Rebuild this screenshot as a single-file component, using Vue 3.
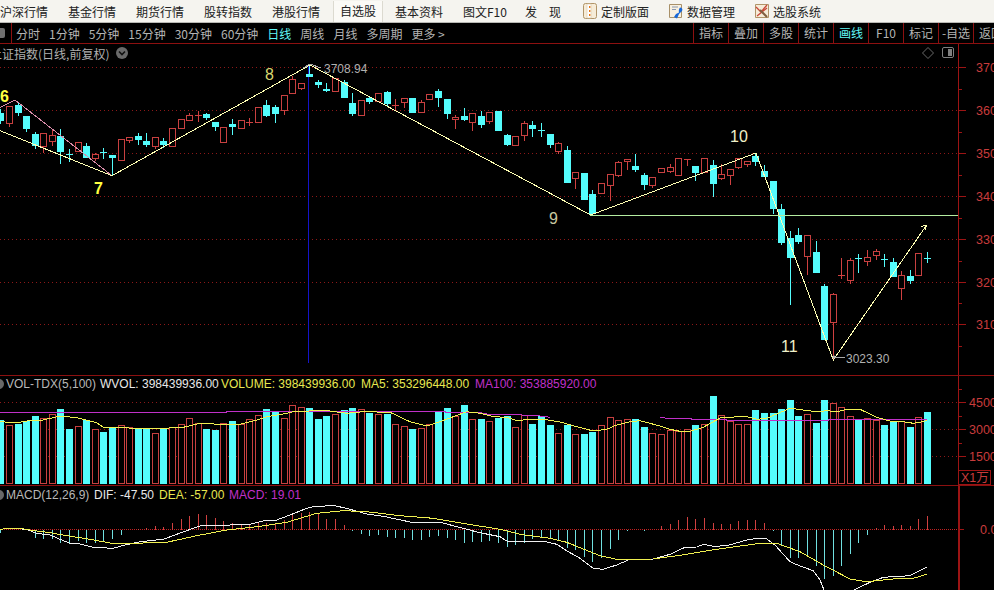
<script setup>
import { computed } from 'vue'

const menuItems = ['沪深行情', '基金行情', '期货行情', '股转指数', '港股行情']
const menuItems2 = ['基本资料', '图文F10', '发　现']
const periods = ['分时', '1分钟', '5分钟', '15分钟', '30分钟', '60分钟', '日线', '周线', '月线', '多周期', '更多 >']
const tools = ['指标', '叠加', '多股', '统计', '画线', 'F10', '标记', '-自选', '返回']

// [colour, body top, body bottom, wick top, wick bottom], read off the reference at 3x
const partA = [
  ['c', 155, 180, 145, 190], ['r', 138, 190, 138, 197], ['c', 133, 157, 122, 165], ['c', 165, 205, 165, 213],
  ['c', 218, 255, 213, 265], ['r', 220, 258, 220, 275], ['r', 224, 243, 208, 255], ['c', 225, 273, 205, 308],
  ['c', 283, 283, 265, 303], ['r', 247, 274, 247, 274], ['c', 255, 290, 247, 290], ['r', 283, 295, 275, 300],
  ['c', 277, 277, 262, 293], ['c', 283, 290, 283, 345], ['r', 238, 300, 238, 300], ['r', 232, 241, 228, 245],
  ['c', 225, 237, 215, 252], ['c', 240, 253, 215, 258], ['r', 232, 258, 232, 264], ['c', 240, 252, 230, 262],
  ['r', 205, 257, 205, 257], ['r', 176, 203, 176, 203], ['r', 165, 179, 155, 179], ['r', 165, 165, 150, 183],
  ['c', 158, 172, 155, 178], ['c', 184, 198, 184, 210], ['r', 202, 245, 202, 245], ['c', 189, 197, 175, 222],
  ['r', 181, 203, 181, 203], ['r', 186, 186, 172, 195], ['r', 141, 185, 141, 185], ['c', 132, 165, 118, 168],
  ['c', 138, 158, 132, 186], ['r', 106, 150, 106, 162], ['r', 58, 100, 45, 100], ['r', 68, 83, 68, 88],
  ['c', 40, 47, 10, 47], ['c', 63, 73, 58, 80], ['c', 83, 90, 65, 92]
]
const partB = [
  ['r', 25, 62, 25, 62], ['c', 33, 80, 28, 80], ['c', 97, 128, 66, 135], ['r', 91, 134, 91, 134],
  ['c', 82, 92, 75, 100], ['r', 68, 92, 68, 92], ['c', 64, 98, 60, 104], ['r', 104, 104, 85, 118],
  ['r', 85, 97, 85, 110], ['c', 81, 125, 81, 125], ['r', 97, 127, 88, 127], ['r', 73, 88, 70, 88],
  ['c', 60, 80, 55, 108], ['c', 84, 128, 84, 143], ['r', 142, 148, 133, 173], ['c', 135, 147, 112, 150],
  ['r', 130, 157, 130, 180], ['c', 135, 162, 120, 170], ['r', 127, 152, 127, 158], ['c', 120, 179, 120, 179],
  ['c', 192, 222, 188, 225], ['r', 199, 224, 195, 224], ['r', 160, 195, 150, 210], ['c', 162, 173, 150, 197],
  ['c', 179, 179, 155, 198], ['c', 190, 222, 190, 230], ['r', 219, 243, 213, 250], ['c', 237, 335, 225, 335],
  ['r', 307, 325, 303, 353], ['c', 306, 386, 306, 386], ['c', 370, 430, 357, 435], ['r', 340, 370, 340, 370],
  ['r', 313, 344, 313, 389], ['r', 277, 315, 270, 318], ['r', 268, 274, 268, 296], ['c', 285, 297, 250, 302],
  ['c', 313, 342, 305, 356], ['r', 320, 345, 320, 350]
]
const partC = [
  ['r', 115, 127, 115, 127], ['r', 112, 122, 100, 127], ['r', 83, 134, 83, 134], ['r', 86, 86, 86, 105],
  ['c', 106, 125, 106, 150], ['r', 85, 125, 85, 125], ['c', 103, 158, 88, 198], ['r', 133, 145, 100, 147],
  ['r', 118, 135, 118, 163], ['r', 85, 111, 85, 113], ['r', 92, 103, 92, 109], ['c', 75, 92, 70, 105],
  ['c', 120, 137, 102, 137], ['c', 150, 233, 150, 248], ['c', 235, 336, 220, 342], ['c', 322, 380, 300, 522],
  ['c', 312, 332, 292, 338], ['r', 316, 379, 316, 432], ['c', 363, 425, 330, 425], ['c', 465, 628, 460, 628],
  ['r', 492, 575, 487, 690], ['r', 436, 436, 380, 445], ['r', 391, 449, 381, 458], ['c', 385, 385, 368, 425],
  ['r', 380, 392, 358, 404], ['r', 363, 374, 355, 386], ['c', 386, 386, 370, 408], ['c', 394, 437, 380, 437],
  ['r', 435, 475, 420, 507], ['c', 435, 450, 418, 458], ['r', 370, 434, 370, 434], ['c', 384, 384, 364, 396]
]

const volTops = [
  148, 165, 158, 150, 135, 145, 132, 114, 174, 168, 148, 178, 182, 172, 165, 172, 172, 172, 190, 172, 170, 163, 145,
  158, 174, 177, 160, 150, 163, 148, 135, 114, 120, 145, 106, 112, 111, 144, 135, 132, 118, 111, 118, 126, 132, 128,
  163, 168, 174, 175, 163, 120, 111, 138, 102, 148, 144, 153, 140, 135, 171, 135, 159, 135, 162, 190, 162, 193, 189,
  183, 166, 141, 150, 148, 144, 168, 190, 193, 180, 183, 178, 162, 162, 75, 135, 152, 162, 162, 117, 126, 126, 114,
  87, 135, 132, 156, 87, 99, 111, 138, 147, 144, 150, 162, 153, 153, 168, 141, 123
]

const macdEnds = [
  140, 133, 133, 133, 155, 158, 158, 170, 175, 165, 172, 170, 165, 160, 147, 133, 128, 125, 120, 122, 110, 98, 90,
  83, 87, 96, 105, 110, 113, 117, 107, 110, 115, 102, 85, 80, 77, 85, 98, 98, 117, 136, 143, 150, 147, 153, 155, 157,
  162, 162, 153, 150, 155, 162, 170, 168, 168, 165, 170, 182, 178, 170, 160, 157, 160, 162, 187, 193, 212, 228, 215,
  188, 162, 136, 131, 135, 133, 120, 113, 102, 93, 98, 96, 110, 113, 113, 105, 102, 102, 110, 136, 180, 215, 217,
  210, 240, 278, 270, 240, 203, 170, 147, 126, 117, 120, 117, 120, 98, 90
]

const barX = (i) => Math.round(0.4 + 8.58 * i) + 0.5
const snap = (y) => Math.round(y) + 0.5

const candles = computed(() => {
  const rows = [
    ...partA.map((r) => [r, 60]),
    ...partB.map((r) => [r, 70]),
    ...partC.map((r) => [r, 130])
  ]
  return rows.map(([r, off], i) => {
    const [color, top, bot, wt, wb] = r
    return {
      i,
      x: barX(i),
      color,
      top: snap(off + top / 3),
      bot: snap(off + bot / 3),
      wickTop: snap(off + wt / 3),
      wickBot: snap(off + wb / 3),
      volTop: snap(370 + volTops[i] / 3)
    }
  })
})

const macdBars = macdEnds.map((z, i) => ({
  i,
  x: barX(i),
  y: snap(485 + z / 3),
  up: z < 133
}))

// turns points read from a 3x crop into page coordinates
const pts = (list, xo, yo) =>
  list.map(([x, y]) => `${(xo + x / 3).toFixed(1)},${(yo + y / 3).toFixed(1)}`).join(' ')

const ma5 = [
  pts([[0, 155], [50, 158], [80, 153], [130, 150], [180, 138], [230, 143], [290, 158], [310, 172], [360, 172], [400, 175], [490, 175], [550, 172], [600, 160], [660, 163], [720, 163], [770, 150], [800, 140], [850, 132], [880, 125], [950, 122], [990, 123]], 0, 370),
  pts([[0, 123], [50, 130], [100, 125], [180, 127], [240, 155], [290, 168], [330, 155], [370, 140], [410, 125], [450, 130], [490, 140], [530, 142], [560, 152], [600, 148], [640, 148], [690, 156], [740, 170], [790, 183], [830, 178], [860, 165], [900, 155], [930, 152], [990, 168]], 330, 370),
  pts([[0, 168], [30, 178], [60, 184], [90, 184], [130, 172], [160, 155], [185, 142], [260, 140], [290, 148], [320, 145], [390, 115], [430, 120], [470, 125], [500, 122], [530, 125], [560, 118], [600, 118], [650, 142], [690, 153], [730, 155], [760, 160], [790, 155], [800, 150]], 660, 370)
]
const ma100 = [
  pts([[0, 128], [680, 128], [680, 123], [990, 123]], 0, 370),
  pts([[0, 123], [345, 123], [345, 128], [450, 128], [475, 133], [575, 135], [630, 138], [660, 142]], 330, 370),
  pts([[0, 142], [20, 145], [95, 145], [95, 148], [200, 148], [200, 152], [505, 152], [505, 148], [800, 148]], 660, 370)
]

const difLines = [
  pts([[0, 133], [20, 131], [60, 131], [85, 135], [110, 145], [150, 150], [185, 165], [210, 175], [240, 177], [280, 187], [340, 190], [375, 180], [420, 170], [490, 163], [530, 148], [580, 130], [610, 120], [690, 120], [750, 118], [790, 108], [830, 105], [870, 90], [920, 70], [945, 64], [1005, 62], [1050, 73], [1100, 87], [1150, 94], [1235, 112], [1320, 112], [1390, 130], [1440, 143], [1500, 155]], 0, 485),
  pts([[0, 155], [20, 168], [130, 168], [170, 178], [205, 200], [240, 220], [280, 250], [310, 253], [350, 240], [385, 225], [460, 222], [510, 208], [555, 187], [590, 186], [612, 178], [640, 184], [680, 182], [740, 165], [770, 160], [800, 162], [825, 180], [870, 230], [900, 243], [940, 257], [960, 285], [972, 315]], 500, 485),
  pts([[1062, 315], [1110, 292], [1150, 277], [1230, 272], [1280, 247]], 500, 485)
]
const deaLines = [
  pts([[0, 133], [20, 131], [60, 130], [90, 135], [150, 143], [200, 152], [270, 163], [335, 175], [400, 175], [500, 172], [590, 152], [680, 135], [780, 124], [860, 112], [950, 85], [1030, 77], [1100, 80], [1200, 92], [1300, 100], [1400, 117], [1500, 133]], 0, 485),
  pts([[0, 133], [60, 148], [150, 160], [200, 172], [300, 212], [350, 223], [460, 222], [560, 208], [650, 193], [780, 175], [830, 175], [900, 200], [970, 240], [1050, 282], [1100, 290], [1180, 282], [1240, 280], [1280, 268]], 500, 485)
]

const priceGrid = [67.5, 110.5, 153.5, 196.5, 239.5, 282.5, 324.5]
const priceLabels = [
  { y: 67.5, t: '3700' }, { y: 110.5, t: '3600' }, { y: 153.5, t: '3500' }, { y: 196.5, t: '3400' },
  { y: 239.5, t: '3300' }, { y: 282.5, t: '3200' }, { y: 324.5, t: '3100' }
]
const priceMinor = [89, 132, 175, 218, 261, 303, 346]
const volLabels = [{ y: 402.5, t: '4500' }, { y: 429.5, t: '3000' }, { y: 456.5, t: '1500' }]
const volMinor = [389.5, 416, 443, 470]
</script>

<template>
  <div class="screen">
    <div class="menu">
      <span v-for="m in menuItems" :key="m" class="menu-item">{{ m }}</span>
      <span class="menu-item active">自选股</span>
      <span v-for="m in menuItems2" :key="m" class="menu-item" :class="{ pulled: m === '发　现' }">{{ m }}</span>
      <span class="menu-tool first">
        <svg width="16" height="18" viewBox="0 0 16 18">
          <rect x="1.5" y="1.5" width="13" height="15" rx="2" fill="#f6ecd8" stroke="#b09468" />
          <rect x="5" y="2" width="4" height="14" fill="#fff" stroke="#d8c8a8" stroke-width=".6" />
          <path d="M7 4h1.4v2H7zM7 8h1.4v2H7zM7 12h1.4v2H7z" fill="#e87818" />
        </svg>
        定制版面
      </span>
      <span class="menu-tool">
        <svg width="16" height="18" viewBox="0 0 16 18">
          <path d="M1.5 2.5h12v13h-12z" fill="#f8f0e0" stroke="#a89068" />
          <path d="M4 5h6M4 7.5h4" stroke="#8898b0" />
          <path d="M12 5.500c2 0 3 2 2 3.500l-3 3 -2 4.500-3-1.500 2-3 3-1.500c-.5-1.500 0-4 1-5z" fill="#1868d8" />
        </svg>
        数据管理
      </span>
      <span class="menu-tool">
        <svg width="16" height="18" viewBox="0 0 16 18">
          <path d="M1.500 2.500h13v13h-13z" fill="#f6ecd8" stroke="#b09468" />
          <path d="M2 5l5 5 6-7M3 14l10-8" fill="none" stroke="#c84838" stroke-width="1.300" />
          <path d="M6 8l7 7" stroke="#806040" stroke-width="2.200" />
        </svg>
        选股系统
      </span>
    </div>

    <div class="toolbar">
      <div class="periods">
        <span class="stub-icon"></span>
        <span class="stub-line"></span>
        <span v-for="p in periods" :key="p" class="period" :class="{ on: p === '日线' }">{{ p }}</span>
      </div>
      <span v-for="t in tools" :key="t" class="tool" :class="{ on: t === '画线' }">{{ t }}</span>
    </div>

    <div class="pane price-pane">
      <div class="pane-main">
        <div class="title-row">
          <span class="title">上证指数(日线,前复权)</span>
          <span class="title-btn">
            <svg width="12" height="12" viewBox="0 0 12 12">
              <circle cx="6" cy="6" r="6" fill="#6a6a6a" />
              <path d="M3 4.500l3 3 3-3" fill="none" stroke="#111" stroke-width="1.600" />
            </svg>
          </span>
          <span class="title-right">
            <svg width="12" height="12" viewBox="0 0 12 12">
              <path d="M6 .5l5.500 5.500-5.500 5.500-5.500-5.500z" fill="none" stroke="#686868" />
            </svg>
            <svg width="13" height="12" viewBox="0 0 13 12">
              <rect x=".5" y=".5" width="11" height="10" rx="1.500" fill="none" stroke="#808080" />
              <rect x="6" y="2" width="4" height="7" fill="#808080" />
            </svg>
          </span>
        </div>
        <svg class="chart" width="958" height="313" viewBox="0 62 958 313">
          <line v-for="y in priceGrid" :key="y" x1="0" :y1="y" x2="958" :y2="y" class="grid" />
          <line x1="308.500" y1="64" x2="308.500" y2="363" stroke="#1414c8" />
          <g v-for="k in candles" :key="k.i" :class="k.color === 'r' ? 'up' : 'down'">
            <line :x1="k.x" :y1="k.wickTop" :x2="k.x" :y2="k.wickBot" class="wick" />
            <line v-if="k.top === k.bot" :x1="k.x - 3.5" :y1="k.top" :x2="k.x + 3.5" :y2="k.top" class="wick" />
            <rect v-else-if="k.color === 'r'" :x="k.x - 3" :y="k.top" width="6" :height="k.bot - k.top" class="hollow" />
            <rect v-else :x="k.x - 3.5" :y="k.top" width="7" :height="k.bot - k.top" class="solid" />
          </g>
          <polyline points="0,107.700 15,100 112,175.700" class="pink" />
          <polyline points="0,130.700 112,175.700 310,65 590.700,215 756,153 833.300,360 926.700,225" class="trend" />
          <polyline points="920.700,226.700 926.700,225 925,230" class="trend" />
          <line x1="590" y1="215.500" x2="958" y2="215.500" class="support" />
          <polyline points="303,68 310,64 321,68" class="leader" />
          <line x1="835" y1="357.500" x2="845" y2="357.500" class="leader" />
          <circle cx="834" cy="357" r="1.500" fill="#b0b0b0" />
          <text x="324" y="73" class="mark">3708.94</text>
          <text x="846" y="363" class="mark">3023.30</text>
          <text x="0" y="102" class="wave bold">6</text>
          <text x="94" y="194" class="wave bold">7</text>
          <text x="265" y="80" class="wave thin">8</text>
          <text x="549" y="224" class="wave dim">9</text>
          <text x="730" y="142" class="wave pale">10</text>
          <text x="781" y="352" class="wave pale">11</text>
        </svg>
      </div>
      <svg class="axis" width="36" height="331" viewBox="958 44 36 331">
        <line x1="958.500" y1="44" x2="958.500" y2="375" class="axis-line" />
        <g v-for="l in priceLabels" :key="l.t">
          <line x1="958" :y1="l.y" x2="966" :y2="l.y" class="axis-line" />
          <text x="976" :y="l.y + 4.500" class="axis-text">{{ l.t }}</text>
        </g>
        <line v-for="y in priceMinor" :key="y" x1="958" :y1="y + .5" x2="962" :y2="y + .5" class="axis-line" />
      </svg>
    </div>

    <div class="pane vol-pane">
      <div class="pane-main">
        <div class="legend">
          <span class="dot"></span>
          <span class="grey slot-vol">VOL-TDX(5,100)</span>
          <span class="white slot-wvol">WVOL: 398439936.00</span>
          <span class="yellow slot-volume">VOLUME: 398439936.00</span>
          <span class="yellow slot-ma5">MA5: 353296448.00</span>
          <span class="purple">MA100: 353885920.00</span>
        </div>
        <svg class="chart" width="958" height="94" viewBox="0 391 958 94">
          <line v-for="l in volLabels" :key="l.t" x1="0" :y1="l.y" x2="958" :y2="l.y" class="grid" />
          <g v-for="k in candles" :key="k.i" :class="k.color === 'r' ? 'up' : 'down'">
            <rect v-if="k.color === 'r'" :x="k.x - 3" :y="k.volTop" width="6" :height="483.500 - k.volTop" class="hollow" />
            <rect v-else :x="k.x - 3.500" :y="k.volTop" width="7" :height="484 - k.volTop" class="solid" />
          </g>
          <polyline v-for="p in ma100" :key="p" :points="p" class="line-ma100" />
          <polyline v-for="p in ma5" :key="p" :points="p" class="line-ma5" />
        </svg>
      </div>
      <svg class="axis" width="36" height="110" viewBox="958 376 36 110">
        <line x1="958.500" y1="376" x2="958.500" y2="486" class="axis-line" />
        <g v-for="l in volLabels" :key="l.t">
          <line x1="958" :y1="l.y" x2="966" :y2="l.y" class="axis-line" />
          <text x="969" :y="l.y + 4.500" class="axis-text">{{ l.t }}</text>
        </g>
        <line v-for="y in volMinor" :key="y" x1="958" :y1="y" x2="962" :y2="y" class="axis-line" />
        <rect x="958.500" y="470.500" width="32" height="14" fill="#000" class="axis-line" />
        <text x="961" y="482" class="axis-text">X1万</text>
      </svg>
    </div>

    <div class="pane macd-pane">
      <div class="pane-main">
        <div class="legend tall">
          <span class="dot"></span>
          <span class="grey slot-macd">MACD(12,26,9)</span>
          <span class="white slot-dif">DIF: -47.50</span>
          <span class="yellow slot-dea">DEA: -57.00</span>
          <span class="purple">MACD: 19.01</span>
        </div>
        <svg class="chart" width="958" height="87" viewBox="0 503 958 87">
          <line x1="0" y1="529.500" x2="958" y2="529.500" class="grid bright" />
          <line
            v-for="b in macdBars"
            :key="b.i"
            :x1="b.x"
            y1="529.500"
            :x2="b.x"
            :y2="b.y"
            :class="b.up ? 'macd-up' : 'macd-down'"
          />
          <polyline v-for="p in difLines" :key="p" :points="p" class="line-dif" />
          <polyline v-for="p in deaLines" :key="p" :points="p" class="line-dea" />
        </svg>
      </div>
      <svg class="axis" width="36" height="104" viewBox="958 486 36 104">
        <line x1="958.500" y1="486" x2="958.500" y2="590" class="axis-line thick" />
        <line x1="958" y1="529.500" x2="964" y2="529.500" class="axis-line" />
        <text x="980" y="534" class="axis-text">0.00</text>
      </svg>
    </div>
  </div>
</template>

<style>
html, body {
  margin: 0;
  background: #000;
}
</style>

<style scoped>
.screen {
  width: 994px;
  height: 590px;
  overflow: hidden;
  background: #000;
  font-family: "Liberation Sans", "Noto Sans CJK SC", sans-serif;
  font-size: 12px;
  display: flex;
  flex-direction: column;
}

.menu {
  height: 22px;
  flex: none;
  display: flex;
  align-items: center;
  background: #f5f4ef;
  border-bottom: 1px solid #b8b8b4;
  color: #222;
  white-space: nowrap;
  font-family: "Noto Sans CJK SC", sans-serif;
  margin-left: -10px;
  width: 1004px;
}

.menu-item {
  width: 48px;
  padding: 0 10px;
  flex: none;
}

.menu-item.active {
  width: 36px;
  height: 21px;
  line-height: 20px;
  padding: 0 6px;
  margin: 0 2px 0 3px;
  background: #fbfaf6;
  border: 1px solid #dcdad0;
  border-top: 0;
  border-bottom: 0;
}

.menu-item.pulled {
  margin-left: -6px;
}

.menu-tool {
  display: flex;
  align-items: center;
  gap: 3px;
  width: 86px;
  flex: none;
}

.menu-tool.first {
  margin-left: -1px;
}

.toolbar {
  height: 20px;
  flex: none;
  display: flex;
  align-items: center;
  border-bottom: 1px solid #8c1010;
  color: #b4b4b4;
  white-space: nowrap;
  font-family: "Noto Sans CJK SC", sans-serif;
}

.periods {
  width: 693px;
  flex: none;
  display: flex;
  align-items: center;
  gap: 9px;
  height: 100%;
}

.stub-icon {
  width: 5px;
  height: 10px;
  background: #707070;
  border-radius: 0 2px 2px 0;
  margin-right: -3px;
}

.stub-line {
  width: 1px;
  height: 100%;
  background: #8c1010;
  margin-right: -5px;
}

.period.on, .tool.on {
  color: #60f8f8;
}

.tool {
  width: 35px;
  height: 100%;
  flex: none;
  box-sizing: border-box;
  border-left: 1px solid #8c1010;
  text-align: center;
  line-height: 19px;
}

.pane {
  display: grid;
  grid-template-columns: 958px 36px;
  flex: none;
}

.price-pane {
  height: 331px;
  border-bottom: 1px solid #8c1010;
}

.vol-pane {
  height: 109px;
  border-bottom: 1px solid #8c1010;
}

.macd-pane {
  height: 104px;
}

.pane-main {
  min-width: 0;
  overflow: hidden;
}

.title-row {
  height: 18px;
  display: flex;
  align-items: center;
  color: #b0b0b0;
  white-space: nowrap;
  font-family: "Noto Sans CJK SC", sans-serif;
}

.title {
  margin-left: -10px;
}

.title-btn {
  margin-left: 7px;
  display: flex;
}

.title-right {
  margin-left: auto;
  margin-right: 3px;
  display: flex;
  gap: 8px;
}

.chart, .axis {
  display: block;
}

.legend {
  height: 15px;
  display: flex;
  align-items: center;
  white-space: nowrap;
}

.legend.tall {
  height: 17px;
}

.legend span {
  flex: none;
}

.dot {
  width: 10px;
  height: 10px;
  margin-left: -6px;
  margin-right: 2px;
  border-radius: 50%;
  background: #686868;
}

.slot-vol { width: 94px; }
.slot-wvol { width: 121px; }
.slot-volume { width: 140px; }
.slot-ma5 { width: 114px; }
.slot-macd { width: 88px; }
.slot-dif { width: 65px; }
.slot-dea { width: 70px; }

.grey { color: #b8b8b8; }
.white { color: #e8e8e8; }
.yellow { color: #e8e850; }
.purple { color: #c030c8; }

.grid {
  stroke: #8c1818;
  stroke-dasharray: 1 3;
  shape-rendering: crispEdges;
}

.grid.bright {
  stroke: #c02020;
  stroke-dasharray: 1 1;
}

.wick, .hollow, .solid, .line-ma5, .line-ma100, .line-dif, .line-dea,
.trend, .pink, .leader, .macd-up, .macd-down, .axis-line, .support {
  shape-rendering: crispEdges;
}

.up .wick { stroke: #d04040; }
.down .wick { stroke: #54fcfc; }

.hollow {
  fill: #000;
  stroke: #c84040;
}

.solid {
  fill: #54fcfc;
}

.trend {
  fill: none;
  stroke: #ffffb4;
}

.support {
  stroke: #b4eca0;
}

.pink {
  fill: none;
  stroke: #d88ca8;
}

.leader {
  fill: none;
  stroke: #a8a8a8;
}

.mark {
  fill: #b0b0b0;
  font-size: 12px;
}

.wave {
  font-size: 16px;
}

.wave.bold { font-weight: 700; fill: #ffff40; }
.wave.thin { fill: #d8d870; }
.wave.dim { fill: #c8c8a0; }
.wave.pale { fill: #f0f0c8; }

.line-ma5 {
  fill: none;
  stroke: #f0f050;
}

.line-ma100 {
  fill: none;
  stroke: #c030c8;
}

.line-dif {
  fill: none;
  stroke: #f0f0f0;
}

.line-dea {
  fill: none;
  stroke: #f0f050;
}

.macd-up { stroke: #d04040; }
.macd-down { stroke: #70e0e0; }

.axis-line {
  stroke: #9c1414;
}

.axis-line.thick {
  stroke-width: 2;
}

.axis-text {
  fill: #c83c3c;
  font-size: 12.500px;
}
</style>
